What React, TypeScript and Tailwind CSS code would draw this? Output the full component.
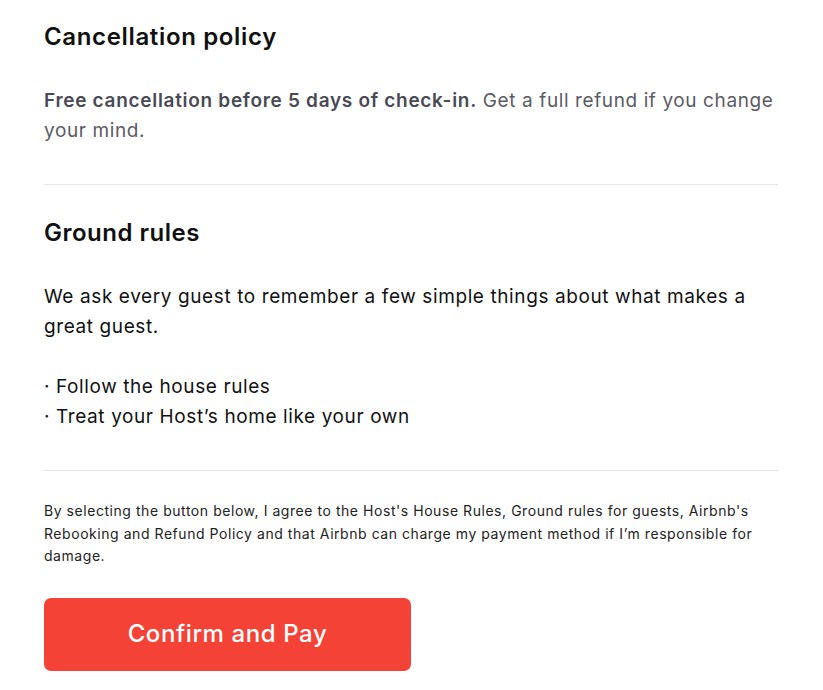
const sans = "font-['Inter','Noto_Sans',sans-serif]"

function Divider() {
  return <div className="h-px w-full bg-[#e5e5e5]" />
}

export default function App() {
  return (
    <div className={`min-h-[690px] bg-white ${sans}`}>
      <div className="ml-[44px] flex w-[734px] flex-col pt-[21px]">
        <h2 className="text-[24px] font-semibold leading-[32px] tracking-[0.65px] text-[#111]">
          Cancellation policy
        </h2>
        <p className="mt-[33px] text-[19px] leading-[30px] tracking-[0.6px] text-[#5b5b64]">
          <span className="font-semibold tracking-[0.7px] text-[#4a4a55]">
            Free cancellation before 5 days of check-in.
          </span>{" "}
          Get a full refund if you change your mind.
        </p>

        <div className="mt-[38px]">
          <Divider />
        </div>

        <h2 className="mt-[32px] text-[24px] font-semibold leading-[32px] tracking-[0.5px] text-[#111]">
          Ground rules
        </h2>
        <p className="mt-[33px] text-[19px] leading-[30px] tracking-[0.6px] text-[#111]">
          We ask every guest to remember a few simple things about what makes a
          great guest.
          <br />
          <br />
          · Follow the house rules
          <br />
          · Treat your Host’s home like your own
        </p>

        <div className="mt-[38px]">
          <Divider />
        </div>

        <p className="mt-[29px] text-[14px] leading-[22.5px] tracking-[0.55px] text-[#222]">
          By selecting the button below, I agree to the Host's House Rules,
          Ground rules for guests, Airbnb's Rebooking and Refund Policy and that
          Airbnb can charge my payment method if I’m responsible for damage.
        </p>

        <button className="mt-[30px] flex h-[73px] w-[367px] items-center justify-center rounded-[7px] bg-[#f44336] text-[24px] font-medium tracking-[0.6px] text-white">
          Confirm and Pay
        </button>
      </div>
    </div>
  )
}
